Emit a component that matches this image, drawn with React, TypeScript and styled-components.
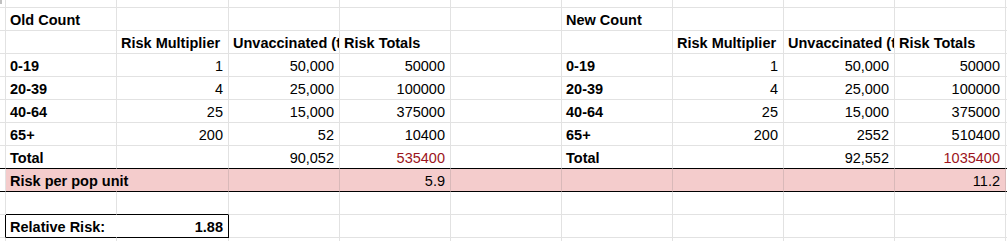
import React from 'react';
import styled, { createGlobalStyle, css } from 'styled-components';

const GlobalStyle = createGlobalStyle`
  html, body {
    margin: 0;
    padding: 0;
    background: #ffffff;
  }
  body {
    font-family: "Liberation Sans", Arial, sans-serif;
    font-size: 14.5px;
    color: #000000;
    overflow: hidden;
  }
`;

const GRID = '#e2e2e2';
const PINK = '#f4cccc';
const PINK_GRID = '#d9b9b9';

type CellSpec = {
  text?: string;
  bold?: boolean;
  right?: boolean;
  red?: boolean;
  overflow?: boolean;
  noRightLine?: boolean;
  boxLeft?: boolean;
  boxRight?: boolean;
  boxBottom?: boolean;
};

type RowSpec = {
  cells: CellSpec[];
  pink?: boolean;
  blackBottom?: boolean;
  boxTopCols?: number;
  boxRow?: boolean;
};

const Sheet = styled.div`
  width: 1007px;
  height: 241px;
  overflow: hidden;
  display: flex;
  flex-direction: column;
`;

const Row = styled.div<{ $height: number; $pink?: boolean }>`
  display: grid;
  grid-template-columns: 6px 111px 112px repeat(7, 111px) 1fr;
  height: ${(p) => p.$height}px;
  flex: none;
  background: ${(p) => (p.$pink ? PINK : 'transparent')};
`;

const Gutter = styled.div<{ $black?: boolean; $bottom: string }>`
  box-sizing: border-box;
  border-right: 1px solid ${(p) => (p.$black ? '#000' : GRID)};
  border-bottom: 1px solid ${(p) => p.$bottom};
  background: #fff;
`;

const Cell = styled.div<{
  $bold?: boolean;
  $right?: boolean;
  $red?: boolean;
  $overflow?: boolean;
  $rightLine: string;
  $bottomLine: string;
}>`
  box-sizing: border-box;
  display: flex;
  align-items: flex-end;
  justify-content: ${(p) => (p.$right ? 'flex-end' : 'flex-start')};
  padding: 0 5px 1px 4px;
  border-right: 1px solid ${(p) => p.$rightLine};
  border-bottom: 1px solid ${(p) => p.$bottomLine};
  line-height: 17px;
  white-space: nowrap;
  font-weight: ${(p) => (p.$bold ? 700 : 400)};
  color: ${(p) => (p.$red ? '#9c1420' : '#000')};
  ${(p) =>
    p.$overflow
      ? css`
          overflow: visible;
          position: relative;
          z-index: 1;
        `
      : css`
          overflow: hidden;
        `}
`;

const Corner = styled.div`
  position: absolute;
  left: 0;
  top: 0;
  width: 2px;
  height: 4px;
  background: #c0c0c0;
`;

const blank = (n: number): CellSpec[] => Array.from({ length: n }, () => ({}));

const block = (
  title: string,
  rows: [string, string, string, string][],
  total: [string, string]
) => ({ title, rows, total });

const oldCount = block(
  'Old Count',
  [
    ['0-19', '1', '50,000', '50000'],
    ['20-39', '4', '25,000', '100000'],
    ['40-64', '25', '15,000', '375000'],
    ['65+', '200', '52', '10400'],
  ],
  ['90,052', '535400']
);

const newCount = block(
  'New Count',
  [
    ['0-19', '1', '50,000', '50000'],
    ['20-39', '4', '25,000', '100000'],
    ['40-64', '25', '15,000', '375000'],
    ['65+', '200', '2552', '510400'],
  ],
  ['92,552', '1035400']
);

const dataRow = (r: [string, string, string, string]): CellSpec[] => [
  { text: r[0], bold: true },
  { text: r[1], right: true },
  { text: r[2], right: true },
  { text: r[3], right: true },
];

const rowsSpec: RowSpec[] = [
  { cells: [{ text: oldCount.title, bold: true }, ...blank(4), { text: newCount.title, bold: true }, ...blank(3)] },
  {
    cells: [
      {},
      { text: 'Risk Multiplier', bold: true },
      { text: 'Unvaccinated (total)', bold: true },
      { text: 'Risk Totals', bold: true },
      {},
      {},
      { text: 'Risk Multiplier', bold: true },
      { text: 'Unvaccinated (total)', bold: true },
      { text: 'Risk Totals', bold: true },
    ],
  },
  ...oldCount.rows.map((r, i) => ({
    cells: [...dataRow(r), {}, ...dataRow(newCount.rows[i])],
  })),
  {
    blackBottom: true,
    cells: [
      { text: 'Total', bold: true },
      {},
      { text: oldCount.total[0], right: true },
      { text: oldCount.total[1], right: true, red: true },
      {},
      { text: 'Total', bold: true },
      {},
      { text: newCount.total[0], right: true },
      { text: newCount.total[1], right: true, red: true },
    ],
  },
  {
    pink: true,
    blackBottom: true,
    cells: [
      { text: 'Risk per pop unit', bold: true, overflow: true, noRightLine: true },
      {},
      {},
      { text: '5.9', right: true },
      ...blank(4),
      { text: '11.2', right: true },
    ],
  },
  { boxTopCols: 2, cells: blank(9) },
  {
    boxRow: true,
    cells: [
      { text: 'Relative Risk:', bold: true, boxLeft: true, boxBottom: true, noRightLine: true },
      { text: '1.88', bold: true, right: true, boxRight: true, boxBottom: true },
      ...blank(7),
    ],
  },
  { cells: blank(9) },
];

const heights = [23, 23, 23, 23, 23, 23, 23, 23, 23, 23, 10];

export default function App() {
  return (
    <>
      <GlobalStyle />
      <Sheet>
        <Row $height={8} style={{ position: 'relative' }}>
          <Gutter $bottom={GRID} />
          {blank(9).map((_, i) => (
            <Cell key={i} $rightLine={GRID} $bottomLine={GRID} />
          ))}
          <Cell $rightLine="transparent" $bottomLine={GRID} />
          <Corner />
        </Row>
        {rowsSpec.map((row, ri) => {
          const rowBottom = row.blackBottom ? '#000' : GRID;
          const lineColor = row.pink ? PINK_GRID : GRID;
          return (
            <Row key={ri} $height={heights[ri]} $pink={row.pink}>
              <Gutter $black={row.boxRow} $bottom={rowBottom} />
              {row.cells.map((c, ci) => {
                let bottom = rowBottom;
                if (row.boxTopCols && ci < row.boxTopCols) bottom = '#000';
                if (c.boxBottom) bottom = '#000';
                let rightLine = lineColor;
                if (c.noRightLine) rightLine = row.pink ? PINK : c.boxLeft ? '#fff' : lineColor;
                if (c.boxRight) rightLine = '#000';
                return (
                  <Cell
                    key={ci}
                    $bold={c.bold}
                    $right={c.right}
                    $red={c.red}
                    $overflow={c.overflow}
                    $rightLine={rightLine}
                    $bottomLine={bottom}
                  >
                    {c.text}
                  </Cell>
                );
              })}
              <Cell
                $rightLine="transparent"
                $bottomLine={rowBottom}
                style={{ background: '#fff' }}
              />
            </Row>
          );
        })}
      </Sheet>
    </>
  );
}
